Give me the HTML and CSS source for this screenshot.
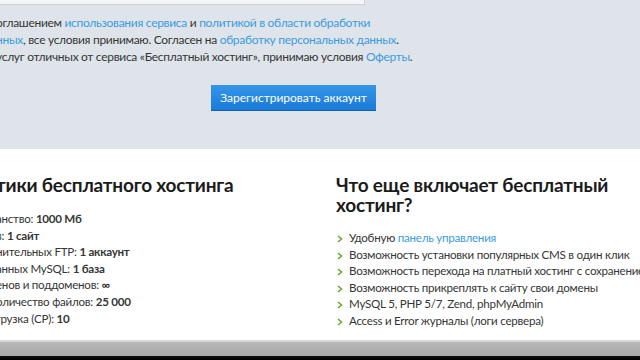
FILE: index.html
```html
<!DOCTYPE html>
<html lang="ru">
<head>
    <meta charset="UTF-8">
    <meta name="viewport" content="width=device-width, initial-scale=1.0">
    <title>Бесплатный хостинг</title>
    <link rel="stylesheet" href="styles.css">
</head>
<body>
    <div class="register">
        <div class="captcha"></div>
        <div class="terms">
            <div class="cut">оглашением <a>использования сервиса</a> и <a>политикой в области обработки</a></div>
            <div class="cut"><a>нных</a>, все условия принимаю. Согласен на <a>обработку персональных данных</a>.</div>
            <div class="cut">услуг отличных от сервиса «Бесплатный хостинг», принимаю условия <a>Оферты</a>.</div>
        </div>
        <div class="buttons">
            <a class="btn">Зарегистрировать аккаунт</a>
        </div>
    </div>

    <div class="features">
        <div class="specs">
            <h2 class="cut">тики бесплатного хостинга</h2>
            <ul>
                <li class="cut">анство: <b>1000 Мб</b></li>
                <li class="cut">в: <b>1 сайт</b></li>
                <li class="cut">нительных FTP: <b>1 аккаунт</b></li>
                <li class="cut">анных MySQL: <b>1 база</b></li>
                <li class="cut">енов и поддоменов: <b>∞</b></li>
                <li class="cut">оличество файлов: <b>25 000</b></li>
                <li class="cut">грузка (CP): <b>10</b></li>
            </ul>
        </div>
        <div class="extras">
            <h2>Что еще включает бесплатный хостинг?</h2>
            <ul>
                <li><svg class="arrow" viewBox="0 0 6 8"><polyline points="1,1 4.5,4 1,7"/></svg>Удобную <a>панель управления</a></li>
                <li><svg class="arrow" viewBox="0 0 6 8"><polyline points="1,1 4.5,4 1,7"/></svg>Возможность установки популярных CMS в один клик</li>
                <li><svg class="arrow" viewBox="0 0 6 8"><polyline points="1,1 4.5,4 1,7"/></svg>Возможность перехода на платный хостинг с сохранением</li>
                <li><svg class="arrow" viewBox="0 0 6 8"><polyline points="1,1 4.5,4 1,7"/></svg>Возможность прикреплять к сайту свои домены</li>
                <li><svg class="arrow" viewBox="0 0 6 8"><polyline points="1,1 4.5,4 1,7"/></svg>MySQL 5, PHP 5/7, Zend, phpMyAdmin</li>
                <li><svg class="arrow" viewBox="0 0 6 8"><polyline points="1,1 4.5,4 1,7"/></svg>Access и Error журналы (логи сервера)</li>
            </ul>
        </div>
    </div>

    <div class="chrome"></div>
</body>
</html>
```

FILE: styles.css
```css
html, body {
    height: 100%;
}
body {
    font-family: Lato, "PT Sans", Arial, sans-serif;
    margin: 0;
    color: #363636;
    overflow: hidden;
    display: flex;
    flex-direction: column;
    background: #fff;
}
a {
    color: #3d9be0;
    text-decoration: none;
}
.cut {
    margin-left: -4px;
}
.register {
    background-color: #dee4ea;
    height: 149px;
    flex-shrink: 0;
}
.captcha {
    width: 364px;
    height: 4px;
    background: #f3f5f7;
    border: 1px solid #c9d1d9;
    border-top: none;
    border-left: none;
}
.terms {
    padding-top: 9px;
    font-size: 12px;
    letter-spacing: -0.3px;
    line-height: 17px;
    white-space: nowrap;
}
.buttons {
    padding-left: 211px;
    margin-top: 20px;
}
.btn {
    display: inline-block;
    width: 165px;
    height: 26px;
    line-height: 26px;
    text-align: center;
    color: #fff;
    font-size: 12px;
    background: linear-gradient(#3497ea, #1a7ad8);
    border-bottom: 1px solid #1460b0;
    box-sizing: border-box;
}
.features {
    flex: 1;
    display: grid;
    grid-template-columns: 336px 1fr;
    padding-top: 26px;
    white-space: nowrap;
}
h2 {
    margin: 0;
    font-size: 19px;
    letter-spacing: -0.2px;
    line-height: 20px;
    color: #1b1b1b;
    font-weight: bold;
}
.extras h2 {
    white-space: normal;
    width: 290px;
}
ul {
    list-style: none;
    margin: 0;
    padding: 0;
    margin-top: 15px;
    font-size: 11.6px;
    letter-spacing: -0.25px;
    line-height: 16.6px;
}
.specs ul {
    margin-top: 16px;
}
.arrow {
    display: inline-block;
    vertical-align: -1px;
    width: 6px;
    height: 8px;
    margin-left: 1px;
    margin-right: 6px;
    fill: none;
    stroke: #6aa832;
    stroke-width: 1.6;
}
.chrome {
    height: 18px;
    flex-shrink: 0;
    border-top: 2px solid #d6d6d6;
    background: linear-gradient(#b8b8b8, #a9a9a9 75%, #111 78%, #000);
}
```
